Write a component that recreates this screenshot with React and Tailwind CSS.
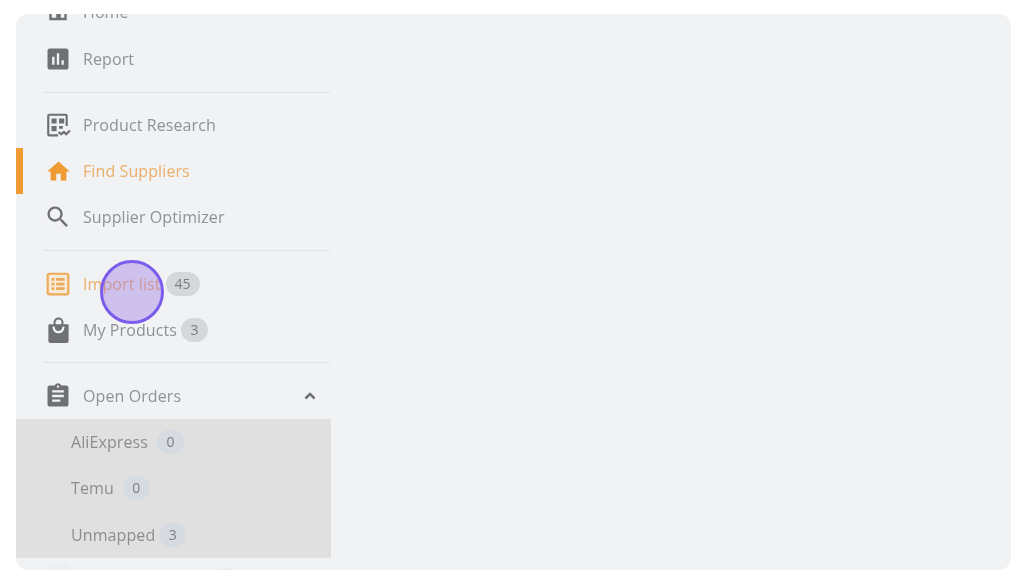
const Svg = ({ size = 24, color = "#6e7072", d }) => (
  <svg width={size} height={size} viewBox="0 0 24 24" fill={color} className="shrink-0">
    <path d={d} />
  </svg>
);

const Slot = ({ children }) => (
  <span className="flex w-6 h-6 items-center justify-center shrink-0 overflow-visible">{children}</span>
);

const HomeOutline = () => (
  <svg width="24" height="24" viewBox="0 0 24 24" fill="none" stroke="#6e7072" strokeWidth="2.400" className="-mt-[4px] shrink-0">
    <path d="M3 10 5 3h14l2 7v1H3zM4.500 11v10h7v-6h2v6h6V11" />
  </svg>
);

const Research = () => (
  <svg width="26" height="26" viewBox="0 0 24 24" fill="none" className="shrink-0">
    <path d="M20 13V3.500a1 1 0 0 0-1-1H4a1 1 0 0 0-1 1v17a1 1 0 0 0 1 1h8" stroke="#6e7072" strokeWidth="2" />
    <path d="M6 6h4.700v4.700H6zM13 6h4.700v4.700H13zM6 13h4.700v4.700H6zM13 13h3.500v2.500H13z" fill="#6e7072" />
    <path d="M12.500 18.500 15 20.500l2.500-2 2 2 3.500-3.500" stroke="#6e7072" strokeWidth="2" />
  </svg>
);

const ImportIcon = () => (
  <svg width="26" height="26" viewBox="0 0 24 24" fill="none" className="shrink-0">
    <rect x="2.500" y="2.500" width="19" height="19" rx="1.500" fill="#f7ead6" stroke="#edaa58" strokeWidth="2" />
    <path d="M6 6.500h2.700v2.500H6zM6 10.800h2.700v2.500H6zM6 15h2.700v2.500H6zM10.300 6.500H18v2.500h-7.700zM10.300 10.800H18v2.500h-7.700zM10.300 15H18v2.500h-7.700z" fill="#ebab5e" />
  </svg>
);

const Bag = () => (
  <svg width="27" height="27" viewBox="0 0 24 24" className="shrink-0">
    <path d="M3 7.500a1 1 0 0 1 1-1h16a1 1 0 0 1 1 1V21a2 2 0 0 1-2 2H5a2 2 0 0 1-2-2z" fill="#6e7072" />
    <circle cx="12" cy="5" r="3.600" fill="none" stroke="#6e7072" strokeWidth="1.800" />
    <path d="M7.500 8.500c.5 3.500 2.300 5 4.500 5s4-1.500 4.500-5" fill="none" stroke="#f1f2f4" strokeWidth="2" />
  </svg>
);

const Badge = ({ children, wide, sub }) => (
  <span
    className={`flex h-6 items-center justify-center rounded-full text-sm text-[#7b7e81] ${wide ? "w-[34px]" : "w-[27px]"} ${
      sub ? "bg-[#d5dbe1]" : "bg-[#d4d8da]"
    }`}
  >
    {children}
  </span>
);

const Row = ({ icon, label, color = "text-[#8f9295]", badge, gap = "ml-1", wide }) => (
  <div className="flex h-[46px] items-center pl-[30px] pr-[15px]">
    <Slot>{icon}</Slot>
    <span className={`ml-[13px] text-base tracking-[0.1px] ${color}`}>{label}</span>
    {badge && (
      <span className={gap}>
        <Badge wide={wide}>{badge}</Badge>
      </span>
    )}
  </div>
);

const SubRow = ({ label, badge, gap = "gap-[9px]" }) => (
  <div className={`flex h-[46.3px] items-center pl-[55px] ${gap}`}>
    <span className="text-base tracking-[0.1px] text-[#8b8e91]">{label}</span>
    <Badge sub>{badge}</Badge>
  </div>
);

const Divider = ({ spacing }) => <div className={`ml-7 mr-px h-px bg-[#e0e1e3] ${spacing}`} />;

export default function App() {
  return (
    <div className="h-[583px] w-[1024px] overflow-hidden bg-white pb-[13px] pl-4 pr-[13px] pt-[14px] font-['Open_Sans',sans-serif] blur-[0.6px]">
      <div className="relative h-full w-full overflow-hidden rounded-xl bg-[#f1f2f4]">
        <div className="-mt-[25px] w-[315px]">
          <div className="pb-px">
            <Row icon={<HomeOutline />} label="Home" />
          </div>
          <Row icon={<Svg size={28} d="M19 3H5c-1.100 0-2 .9-2 2v14c0 1.100.9 2 2 2h14c1.100 0 2-.9 2-2V5c0-1.100-.9-2-2-2zM9 17H7v-7h2v7zm4 0h-2V7h2v10zm4 0h-2v-4h2v4z" />} label="Report" />
          <Divider spacing="mt-[10px] mb-[9px]" />
          <Row icon={<Research />} label="Product Research" />
          <div className="relative">
            <div className="absolute bottom-0 left-0 top-0 w-[7px] bg-[#ef9a32]" />
            <Row
              icon={<Svg size={27} color="#ef9a32" d="M10 20v-6h4v6h5v-8h3L12 3 2 12h3v8z" />}
              label="Find Suppliers"
              color="text-[#ecae68]"
            />
          </div>
          <Row icon={<Svg size={28} d="M15.500 14h-.79l-.28-.27C15.410 12.590 16 11.110 16 9.500 16 5.910 13.090 3 9.500 3S3 5.910 3 9.500 5.910 16 9.500 16c1.610 0 3.090-.59 4.230-1.570l.27.28v.79l5 4.990L20.490 19l-4.990-5zm-6 0C7.010 14 5 11.990 5 9.500S7.010 5 9.500 5 14 7.010 14 9.500 11.990 14 9.500 14z" />} label="Supplier Optimizer" />
          <Divider spacing="mt-[10px] mb-[10px]" />
          <Row icon={<ImportIcon />} label="Import list" color="text-[#ecae68]" badge="45" wide gap="ml-[5px]" />
          <Row icon={<Bag />} label="My Products" badge="3" />
          <Divider spacing="mt-[9px] mb-[10px]" />
          <div className="flex h-[46px] items-center pl-[30px] pr-[15px]">
            <Slot>
              <Svg size={28} d="M19 3h-4.180C14.400 1.840 13.300 1 12 1c-1.300 0-2.400.84-2.820 2H5c-1.100 0-2 .9-2 2v14c0 1.100.9 2 2 2h14c1.100 0 2-.9 2-2V5c0-1.100-.9-2-2-2zm-7 0c.55 0 1 .45 1 1s-.45 1-1 1-1-.45-1-1 .45-1 1-1zm2 14H7v-2h7v2zm3-4H7v-2h10v2zm0-4H7V7h10v2z" />
            </Slot>
            <span className="ml-[13px] text-base tracking-[0.1px] text-[#8f9295]">Open Orders</span>
            <span className="ml-auto mr-[-4px]">
              <svg width="20" height="20" viewBox="0 0 24 24" fill="none" stroke="#6e7072" strokeWidth="3" className="shrink-0">
                <path d="M6.500 15 12 9.500l5.500 5.500" />
              </svg>
            </span>
          </div>
          <div className="bg-[#e0e0e0]">
            <SubRow label="AliExpress" badge="0" />
            <SubRow label="Temu" badge="0" />
            <SubRow label="Unmapped" badge="3" gap="gap-1" />
          </div>
          <div className="flex h-[46px] items-start pl-[30px] pt-[10px] opacity-20">
            <span className="-mt-[5px] h-6 w-6 rounded-sm bg-[#e4e5e7]" />
            <span className="ml-[143px]">
              <Badge />
            </span>
          </div>
        </div>
        <div className="absolute left-[84px] top-[246px] h-[64px] w-[64px] rounded-full border-[3px] border-[#7b5cec] bg-[#9a78e6]/40" />
      </div>
    </div>
  );
}
